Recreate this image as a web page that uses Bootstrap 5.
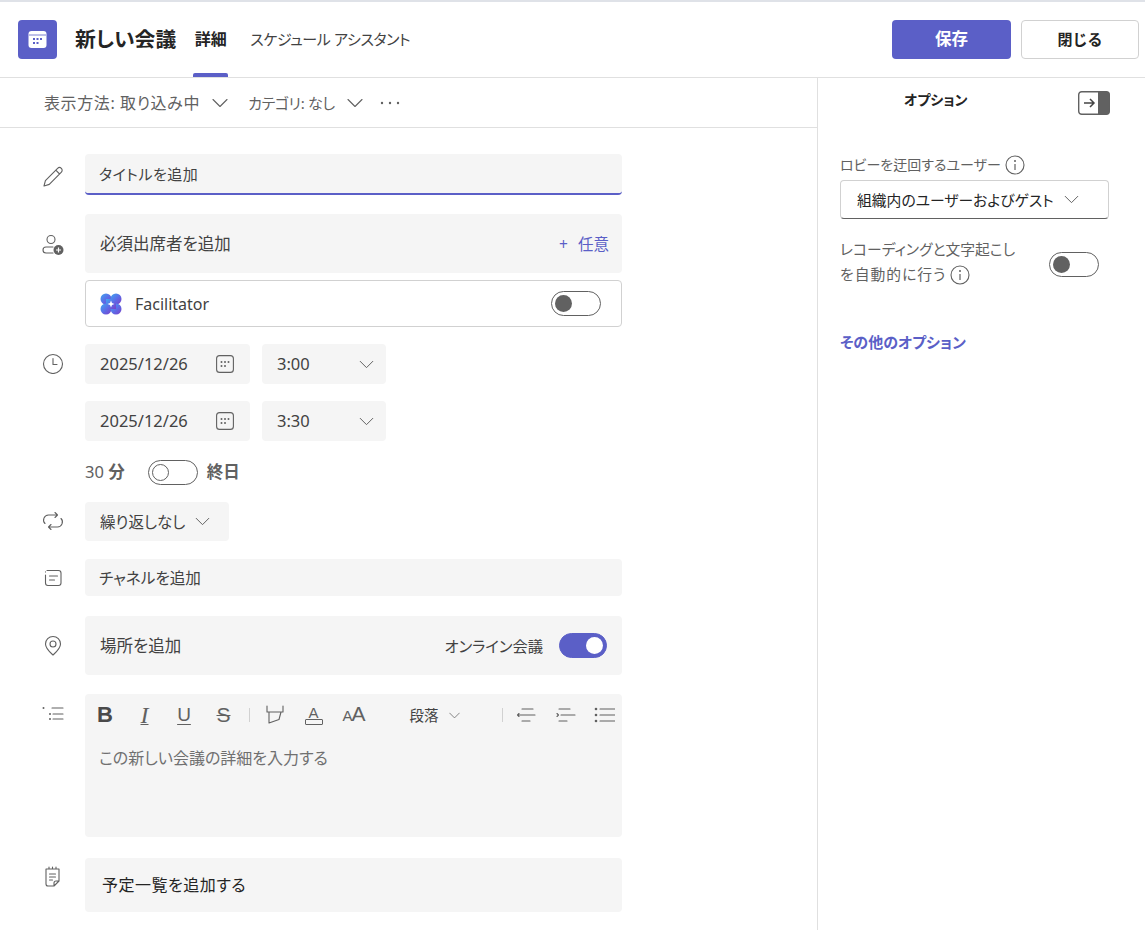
<!DOCTYPE html>
<html lang="ja">
<head>
    <meta charset="UTF-8">
    <meta name="viewport" content="width=device-width, initial-scale=1.0">
    <title>新しい会議</title>
    <link href="https://cdn.jsdelivr.net/npm/bootstrap@5.3.0/dist/css/bootstrap.min.css" rel="stylesheet">
    <style>
        html, body { height: 932px; overflow: hidden; }
        body { font-family: "Noto Sans", "Noto Sans CJK JP", sans-serif; font-size: 15px; color: #424242; background: #fff; font-feature-settings: "palt"; line-height: 20px; }
        svg { display: block; flex: none; }
        .ln { fill: none; stroke: #616161; stroke-width: 1.1; stroke-linecap: round; stroke-linejoin: round; }
        .top-bar { height: 78px; border-top: 2px solid #dfe2e8; border-bottom: 1px solid #e0e0e0; padding: 18px 6px 0 18px; }
        .app-tile { width: 39px; height: 39px; background: #5b5fc7; border-radius: 4px; }
        .mtg-title { font-size: 20.8px; font-weight: 700; color: #242424; margin-left: 18px; line-height: 39px; }
        .tab-on, .tab-off { font-size: 15px; color: #424242; line-height: 39px; position: relative; height: 57px; }
        .tab-on { font-size: 16px; font-weight: 700; color: #242424; margin-left: 17px; padding: 0 1.5px; }
        .tab-on::after { content: ""; position: absolute; left: 0; right: 0; bottom: 0; height: 4px; background: #5b5fc7; border-radius: 2px 2px 0 0; }
        .tab-off { margin-left: 22px; letter-spacing: -.4px; }
        .btn-save, .btn-close-mtg { height: 39px; width: 119px; font-size: 15px; font-weight: 700; border-radius: 4px; padding: 0; }
        .btn-save, .btn-save:hover { background: #5b5fc7; color: #fff; border: 0; font-size: 16.5px; }
        .btn-close-mtg { width: 118px; background: #fff; color: #242424; border: 1px solid #d1d1d1; margin-left: 10px; }
        .main-wrap { height: 852px; }
        .left-pane { width: 818px; border-right: 1px solid #e0e0e0; }
        .view-bar { height: 50px; border-bottom: 1px solid #e0e0e0; padding-left: 44px; color: #616161; font-size: 15px; }
        .view-txt { font-size: 16px; letter-spacing: .6px; }
        .cat-txt { margin-left: 20px; letter-spacing: -.3px; }
        .view-chev { margin-left: 12px; }
        .view-dots { margin-left: 17px; }
        .form-area { padding-top: 26px; }
        .frow { display: flex; }
        .ico-slot { width: 85px; flex: none; padding-left: 42px; }
        .fld { width: 537px; background: #f5f5f5; border-radius: 4px; color: #424242; display: flex; align-items: center; padding-left: 15px; font-size: 16.5px; }
        .fld-title { height: 41px; border-bottom: 2px solid #5b5fc7; padding-left: 14px; margin-bottom: 19px; font-size: 15px; letter-spacing: .5px; }
        .fld-att { height: 59px; justify-content: space-between; padding-right: 13px; margin-bottom: 7px; }
        .add-opt { color: #5b5fc7; font-size: 15.5px; word-spacing: 6px; }
        .fld-fac { height: 47px; background: #fff; border: 1px solid #d1d1d1; justify-content: space-between; padding-right: 20px; margin-bottom: 17px; padding-left: 14px; font-size: 16px; }
        .fac-gap { gap: 13px; }
        .fac-tgl { width: 49px; }
        .dt-box { width: 165px; height: 40px; justify-content: space-between; padding-right: 16px; }
        .dt-gap { margin-bottom: 17px; }
        .tm-box { width: 124px; height: 40px; margin-left: 12px; justify-content: space-between; padding-right: 12px; }
        .dur-row { height: 24px; margin: 19px 0 18px; font-size: 16.5px; color: #616161; }
        .dur-row b { color: #616161; }
        .dur-tgl { margin-left: 23px; }
        .dur-lbl { margin-left: 9px; }
        .rep-box { width: 144px; height: 39px; gap: 10px; margin-bottom: 18px; font-size: 15.5px; }
        .chn-box { height: 37px; margin-bottom: 20px; padding-left: 14px; font-size: 15.6px; }
        .loc-box { height: 59px; justify-content: space-between; padding-right: 15px; margin-bottom: 19px; }
        .loc-txt { font-size: 15.3px; }
        .edit-box { width: 537px; height: 143px; background: #f5f5f5; border-radius: 4px; margin-bottom: 21px; padding-left: 8px; }
        .fmt-bar { height: 42px; margin-bottom: 12px; }
        .fmt { width: 24px; text-align: center; color: #4a4a4a; line-height: 24px; margin-right: 15.5px; }
        .fmt-b { font-family: "Liberation Sans", sans-serif; font-weight: 700; font-size: 22px; }
        .fmt-i { font-family: "Liberation Serif", serif; font-style: italic; font-size: 24px; text-decoration: underline; text-decoration-thickness: 1px; text-underline-offset: 1px; color: #616161; }
        .fmt-u { font-family: "Liberation Sans", sans-serif; font-size: 19px; text-decoration: underline; text-underline-offset: 3px; text-decoration-thickness: 1px; color: #616161; }
        .fmt-s { font-family: "Liberation Sans", sans-serif; font-size: 21px; text-decoration: line-through; text-decoration-thickness: 1px; margin-right: 0; color: #616161; }
        .fmt-div { width: 1px; height: 14px; background: #d1d1d1; }
        .div-a { margin: 0 16px 0 13px; }
        .div-b { margin: 0 13px 0 0; }
        .fmt-a { font-family: "Liberation Sans", sans-serif; font-size: 15px; line-height: 13px; width: 18px; margin: 0 20px 0 21px; text-align: center; color: #616161; }
        .fmt-a::after { content: ""; display: block; height: 6px; border: 1px solid #616161; border-radius: 1px; }
        .fmt-aa small { font-size: 15px; }
        .fmt-aa { font-family: "Liberation Sans", sans-serif; font-size: 21px; letter-spacing: -1px; color: #616161; width: 21px; }
        .para-sel { font-size: 14.5px; margin-left: 46px; gap: 10px; width: 92px; }
        .ind-gap { margin-left: 20px; }
        .lst-gap { margin-left: 18px; }
        .edit-hint { color: #707070; font-size: 16px; padding-left: 6px; }
        .agn-box { height: 54px; color: #242424; padding-left: 17px; font-size: 16px; letter-spacing: .5px; }
        .side-pane { width: 327px; padding: 0 35px 0 22px; }
        .side-head { height: 38px; padding-top: 12px; color: #242424; font-size: 14px; font-weight: 700; }
        .panel-ico { margin-top: 1px; }
        .side-lbl { color: #616161; font-size: 14px; line-height: 25px; }
        .wide-lbl { font-size: 14.8px; }
        .rec-line2 { letter-spacing: 1px; }
        .bypass-lbl { margin-top: 36px; }
        .side-sel { width: 269px; height: 39px; border: 1px solid #d1d1d1; border-bottom-color: #616161; border-radius: 4px; padding-left: 16px; color: #242424; font-size: 14.8px; gap: 10px; margin-top: 3px; }
        .rec-row { margin-top: 18px; }
        .rec-tgl { margin: 4px 11px 0 0; }
        .more-opt { color: #5b5fc7; font-weight: 700; font-size: 15px; margin-top: 45px; }
        .tgl { width: 50px; height: 25px; border: 1px solid #616161; border-radius: 13px; display: block; position: relative; background: #fff; flex: none; }
        .tgl::after { content: ""; position: absolute; top: 3px; left: 3px; width: 17px; height: 17px; border-radius: 50%; background: #616161; }
        .tgl-on { width: 48px; background: #5b5fc7; border-color: #5b5fc7; }
        .tgl-on::after { background: #fff; left: auto; right: 3px; }
        .tgl-hollow::after { background: #fff; border: 1px solid #616161; }
        .loc-ico { margin-top: 2px; }
    </style>
</head>
<body>
    <svg width="0" height="0" class="position-absolute">
        <symbol id="chev" viewBox="0 0 16 10"><path d="M1 1.500l7 7 7-7" fill="none" stroke="#616161" stroke-width="1.100" stroke-linecap="round" stroke-linejoin="round"/></symbol>
        <symbol id="cal" viewBox="0 0 18 18"><rect x=".6" y=".6" width="16.800" height="16.800" rx="3" fill="none" stroke="#616161" stroke-width="1.100"/><g fill="#616161"><circle cx="5.500" cy="7" r="1"/><circle cx="9" cy="7" r="1"/><circle cx="12.500" cy="7" r="1"/><circle cx="5.500" cy="11" r="1"/><circle cx="9" cy="11" r="1"/></g></symbol>
        <symbol id="info" viewBox="0 0 20 20"><circle cx="10" cy="10" r="9" fill="none" stroke="#616161" stroke-width="1.100"/><circle cx="10" cy="6" r="1" fill="#616161"/><path d="M10 9v6" stroke="#616161" stroke-width="1.200"/></symbol>
    </svg>

    <header class="top-bar d-flex align-items-start">
        <div class="app-tile d-flex align-items-center justify-content-center">
            <svg width="19" height="19" viewBox="0 0 19 19"><rect width="18" height="17" x=".5" y="1" rx="3" fill="#fff"/><path d="M1 5h17" stroke="#5b5fc7" stroke-width=".8"/><g fill="#5b5fc7"><rect x="5" y="8" width="2" height="2"/><rect x="8.500" y="8" width="2" height="2"/><rect x="12" y="8" width="2" height="2"/><rect x="5" y="12" width="2" height="2"/><rect x="8.500" y="12" width="2" height="2"/></g></svg>
        </div>
        <div class="mtg-title">新しい会議</div>
        <div class="tab-on">詳細</div>
        <div class="tab-off">スケジュール アシスタント</div>
        <button type="button" class="btn btn-save ms-auto">保存</button>
        <button type="button" class="btn btn-close-mtg">閉じる</button>
    </header>

    <div class="main-wrap d-flex">
        <div class="left-pane">
            <div class="view-bar d-flex align-items-center">
                <span class="view-txt">表示方法: 取り込み中</span>
                <svg class="view-chev" width="16" height="10"><use href="#chev"/></svg>
                <span class="cat-txt">カテゴリ: なし</span>
                <svg class="view-chev" width="16" height="10"><use href="#chev"/></svg>
                <svg class="view-dots" width="20" height="4" viewBox="0 0 20 4"><g fill="#616161"><circle cx="2" cy="2" r="1.200"/><circle cx="10" cy="2" r="1.200"/><circle cx="18" cy="2" r="1.200"/></g></svg>
            </div>

            <div class="form-area">
                <div class="frow">
                    <div class="ico-slot pt-2">
                        <svg width="22" height="22" class="mt-1" viewBox="0 0 22 22"><path class="ln" d="M2 20l1.400-5.400L15.600 2.400a2.600 2.600 0 0 1 3.800 3.700L7.300 18.400zM13.800 4.200l3.800 3.800"/></svg>
                    </div>
                    <div class="fld fld-title">タイトルを追加</div>
                </div>
                <div class="frow">
                    <div class="ico-slot pt-3">
                        <svg class="mt-1" width="22" height="22" viewBox="0 0 22 22"><circle class="ln" cx="9" cy="5.500" r="4"/><path class="ln" d="M11 13H4a2.800 2.800 0 0 0 0 6h7"/><circle cx="16.500" cy="16" r="5" fill="#616161"/><path d="M16.500 13.500v5M14 16h5" stroke="#fff" stroke-width="1.200"/></svg>
                    </div>
                    <div class="fld fld-att"><span>必須出席者を追加</span><span class="add-opt">+ 任意</span></div>
                </div>
                <div class="frow">
                    <div class="ico-slot"></div>
                    <div class="fld fld-fac">
                        <span class="d-flex align-items-center fac-gap">
                            <svg width="22" height="22" viewBox="0 0 22 22"><defs><linearGradient id="fac" x1="0" y1="0" x2="1" y2="1"><stop offset="0" stop-color="#3fa7f0"/><stop offset=".5" stop-color="#5b6ee8"/><stop offset="1" stop-color="#7a3fc9"/></linearGradient></defs><g fill="url(#fac)"><circle cx="6" cy="6" r="5.500"/><circle cx="16" cy="6" r="5.500"/><circle cx="6" cy="16" r="5.500"/><circle cx="16" cy="16" r="5.500"/><rect x="6" y="6" width="10" height="10"/></g><path d="M11 7.500l1 2.500 2.500 1-2.500 1-1 2.500-1-2.500-2.500-1 2.500-1z" fill="#fff"/></svg>
                            <span>Facilitator</span>
                        </span>
                        <span class="tgl fac-tgl"></span>
                    </div>
                </div>
                <div class="frow dt-gap">
                    <div class="ico-slot pt-2">
                        <svg width="22" height="22" viewBox="0 0 22 22"><circle class="ln" cx="11" cy="12" r="9.500"/><path class="ln" d="M11 6.500V12.500h4"/></svg>
                    </div>
                    <div class="fld dt-box"><span>2025/12/26</span><svg width="18" height="18"><use href="#cal"/></svg></div>
                    <div class="fld tm-box"><span>3:00</span><svg width="15" height="9"><use href="#chev"/></svg></div>
                </div>
                <div class="frow">
                    <div class="ico-slot"></div>
                    <div class="fld dt-box"><span>2025/12/26</span><svg width="18" height="18"><use href="#cal"/></svg></div>
                    <div class="fld tm-box"><span>3:30</span><svg width="15" height="9"><use href="#chev"/></svg></div>
                </div>
                <div class="frow align-items-center dur-row">
                    <div class="ico-slot"></div>
                    <span>30 <b>分</b></span>
                    <span class="tgl tgl-hollow dur-tgl"></span>
                    <b class="dur-lbl">終日</b>
                </div>
                <div class="frow">
                    <div class="ico-slot pt-2">
                        <svg width="22" height="22" viewBox="0 0 22 22"><path class="ln" d="M13 2.500l2.500 2.500-2.500 2.500M15 5H6.500a5 5 0 0 0-3.500 8.500M9 19.500L6.500 17 9 14.500M7 17h8.500a5 5 0 0 0 3.500-8.500"/></svg>
                    </div>
                    <div class="fld rep-box"><span>繰り返しなし</span><svg width="15" height="9"><use href="#chev"/></svg></div>
                </div>
                <div class="frow">
                    <div class="ico-slot pt-2">
                        <svg width="22" height="22" viewBox="0 0 22 22"><path class="ln" d="M5 3.500h11.500a2.500 2.500 0 0 1 2.500 2.500v10a2.500 2.500 0 0 1-2.500 2.500H6A2.500 2.500 0 0 1 3.500 16V8M3.500 5v-.1M7.500 9h8M7.500 13h5"/></svg>
                    </div>
                    <div class="fld chn-box">チャネルを追加</div>
                </div>
                <div class="frow">
                    <div class="ico-slot pt-3">
                        <svg class="loc-ico" width="22" height="22" viewBox="0 0 22 22"><path class="ln" d="M11 21c-3-2.800-7.500-6.500-7.500-11a7.500 7.500 0 0 1 15 0c0 4.500-4.500 8.200-7.500 11z"/><circle class="ln" cx="11" cy="10" r="3"/></svg>
                    </div>
                    <div class="fld loc-box"><span>場所を追加</span><span class="d-flex align-items-center gap-3"><span class="loc-txt">オンライン会議</span><span class="tgl tgl-on"></span></span></div>
                </div>
                <div class="frow">
                    <div class="ico-slot pt-2">
                        <svg width="22" height="22" viewBox="0 0 22 22"><g fill="#616161"><circle cx="1.500" cy="6" r="1"/><circle cx="8" cy="12" r="1"/><circle cx="8" cy="17" r="1"/></g><path class="ln" d="M10 6h11M11 12h10M11 17h10"/></svg>
                    </div>
                    <div class="edit-box">
                        <div class="fmt-bar d-flex align-items-center">
                            <span class="fmt fmt-b">B</span>
                            <span class="fmt fmt-i">I</span>
                            <span class="fmt fmt-u">U</span>
                            <span class="fmt fmt-s">S</span>
                            <span class="fmt-div div-a"></span>
                            <svg width="18" height="20" viewBox="0 0 18 20"><path class="ln" d="M1 1v6h16V1M3 7v11l10-3.500L15 7"/></svg>
                            <span class="fmt-a">A</span>
                            <span class="fmt-aa"><small>A</small>A</span>
                            <span class="para-sel d-flex align-items-center">段落<svg width="11" height="7"><use href="#chev"/></svg></span>
                            <span class="fmt-div div-b"></span>
                            <svg class="out-ico" width="20" height="16" viewBox="0 0 20 16"><path class="ln" d="M6 2h11M2 8h17M6 14h8M3 6.500L1.500 8 3 9.500"/></svg>
                            <svg class="ind-gap" width="20" height="16" viewBox="0 0 20 16"><path class="ln" d="M3 2h11M5 8h14M3 14h8M1 6.500L2.500 8 1 9.500"/></svg>
                            <svg class="lst-gap" width="21" height="16" viewBox="0 0 21 16"><g fill="#616161"><circle cx="2" cy="2" r="1.300"/><circle cx="2" cy="8" r="1.300"/><circle cx="2" cy="14" r="1.300"/></g><path class="ln" d="M6 2h15M6 8h15M6 14h15"/></svg>
                        </div>
                        <div class="edit-hint">この新しい会議の詳細を入力する</div>
                    </div>
                </div>
                <div class="frow">
                    <div class="ico-slot pt-2">
                        <svg width="22" height="22" viewBox="0 0 22 22"><path class="ln" d="M4 3h13v12l-5 5H6a2 2 0 0 1-2-2zM12 20v-3a2 2 0 0 1 2-2h3M7.500 8h6M7.500 11h6M7.500 14h3M7 1v2M10.500 1v2M14 1v2"/></svg>
                    </div>
                    <div class="fld agn-box">予定一覧を追加する</div>
                </div>
            </div>
        </div>

        <aside class="side-pane">
            <div class="side-head d-flex">
                <span class="flex-grow-1 ps-5 ms-3">オプション</span>
                <svg class="panel-ico" width="32" height="24" viewBox="0 0 32 24"><rect x=".7" y=".7" width="30.600" height="22.600" rx="3" fill="#fff" stroke="#616161" stroke-width="1.400"/><path d="M20 .7h8.500a3 3 0 0 1 3 3v16.600a3 3 0 0 1-3 3H20z" fill="#616161"/><path d="M6 12h10M12 8l4 4-4 4" fill="none" stroke="#444" stroke-width="1.500"/></svg>
            </div>
            <div class="side-lbl d-flex align-items-center gap-1 bypass-lbl">ロビーを迂回するユーザー <svg width="20" height="20"><use href="#info"/></svg></div>
            <div class="side-sel d-flex align-items-center"><span>組織内のユーザーおよびゲスト</span><svg width="15" height="9"><use href="#chev"/></svg></div>
            <div class="d-flex justify-content-between align-items-center rec-row">
                <div class="side-lbl wide-lbl">レコーディングと文字起こし<br><span class="d-inline-flex align-items-center gap-1 rec-line2">を自動的に行う <svg width="20" height="20"><use href="#info"/></svg></span></div>
                <span class="tgl rec-tgl"></span>
            </div>
            <div class="more-opt">その他のオプション</div>
        </aside>
    </div>

    <script src="https://cdn.jsdelivr.net/npm/bootstrap@5.3.0/dist/js/bootstrap.bundle.min.js"></script>
</body>
</html>
